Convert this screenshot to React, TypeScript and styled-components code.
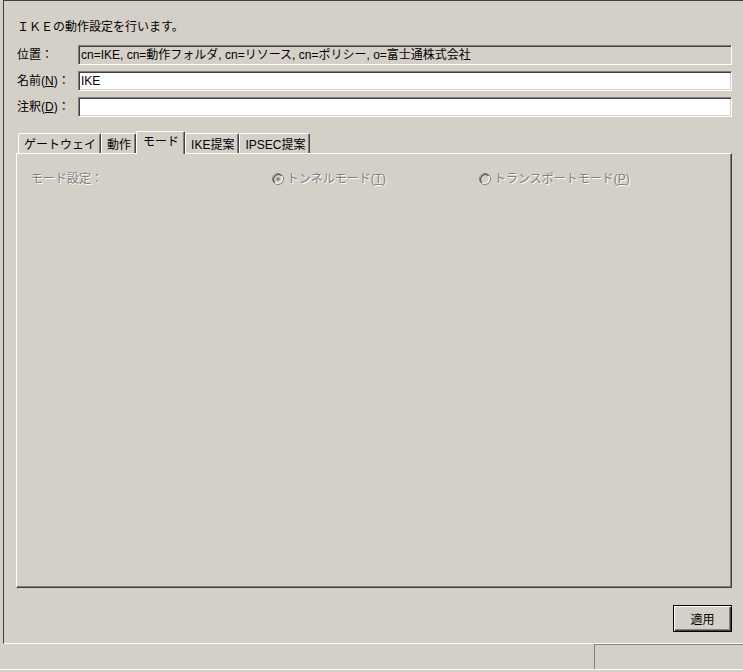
import React from "react";
import styled, { createGlobalStyle } from "styled-components";

const Global = createGlobalStyle`
  html, body { margin: 0; padding: 0; background: #d4d0c8; }
  body {
    font-family: "Liberation Sans", "Noto Sans CJK JP", sans-serif;
    font-size: 12px;
    color: #000;
    overflow: hidden;
  }
`;

const Root = styled.div`
  width: 743px;
  height: 672px;
  display: flex;
  flex-direction: column;
  background: #d4d0c8;
  overflow: hidden;
`;

const Main = styled.div`
  margin-left: 3px;
  height: 644px;
  box-sizing: border-box;
  border-top: 1px solid #404040;
  border-left: 1px solid #404040;
  border-bottom: 1px solid #ffffff;
  padding: 19px 11px 0 12px;
  display: flex;
  flex-direction: column;
`;

const Title = styled.div`
  height: 14px;
  line-height: 14px;
  margin-left: 1px;
  margin-bottom: 11px;
`;

const Form = styled.div`
  display: grid;
  grid-template-columns: 62px 1fr;
  row-gap: 6px;
  align-items: center;
`;

const Label = styled.div`
  line-height: 14px;
  margin-left: 1px;
`;

const Field = styled.div<{ $readonly?: boolean }>`
  height: 20px;
  box-sizing: border-box;
  background: ${(p) => (p.$readonly ? "#d4d0c8" : "#ffffff")};
  border-top: 1px solid #808080;
  border-left: 1px solid #808080;
  border-right: 1px solid #ffffff;
  border-bottom: 1px solid #ffffff;
  box-shadow: inset 1px 1px 0 #404040, inset -1px -1px 0 #d4d0c8;
  padding: 0 2px;
  line-height: 18px;
  white-space: nowrap;
  overflow: hidden;
`;

const TabArea = styled.div`
  margin-top: 14px;
  display: flex;
  flex-direction: column;
`;

const TabStrip = styled.div`
  display: flex;
  align-items: flex-end;
  height: 22px;
  padding-left: 2px;
  position: relative;
  z-index: 1;
`;

const Tab = styled.div<{ $active?: boolean }>`
  box-sizing: border-box;
  height: ${(p) => (p.$active ? "23px" : "20px")};
  margin: ${(p) => (p.$active ? "0 0 -1px 0" : "0")};
  padding: ${(p) => (p.$active ? "2px 5px 0 6px" : "3px 4px 0 5px")};
  border-top: 1px solid #ffffff;
  border-left: 1px solid #ffffff;
  border-right: 1px solid #404040;
  border-radius: 2px 2px 0 0;
  box-shadow: inset -1px 0 0 #808080;
  background: #d4d0c8;
  line-height: 16px;
  white-space: nowrap;
  position: relative;
  z-index: ${(p) => (p.$active ? 2 : 1)};
`;

const Panel = styled.div`
  height: 435px;
  box-sizing: border-box;
  border-top: 1px solid #ffffff;
  border-left: 1px solid #ffffff;
  border-right: 1px solid #404040;
  border-bottom: 1px solid #404040;
  box-shadow: inset -1px -1px 0 #808080;
  padding: 18px 0 0 14px;
`;

const ModeRow = styled.div`
  display: grid;
  grid-template-columns: 241px 207px 1fr;
  align-items: center;
  height: 14px;
`;

const Etched = styled.span`
  color: #808080;
  text-shadow: 1px 1px 0 #ffffff;
  line-height: 14px;
  white-space: nowrap;
`;

const RadioItem = styled.div`
  display: flex;
  align-items: center;
  gap: 3px;
`;

const Footer = styled.div`
  display: flex;
  justify-content: flex-end;
  margin-top: 17px;
`;

const Button = styled.button`
  width: 59px;
  height: 27px;
  box-sizing: border-box;
  background: #d4d0c8;
  border: 1px solid #000000;
  box-shadow: inset 1px 1px 0 #ffffff, inset -1px -1px 0 #404040, inset -2px -2px 0 #808080;
  font-family: "Liberation Sans", "Noto Sans CJK JP", sans-serif;
  font-size: 12px;
  color: #000;
  padding: 0;
`;

const StatusBar = styled.div`
  height: 25px;
  display: flex;
  justify-content: flex-end;
  border-bottom: 1px solid #ffffff;
`;

const StatusPanel = styled.div`
  width: 149px;
  box-sizing: border-box;
  border-top: 1px solid #808080;
  border-left: 1px solid #808080;
`;

const Radio = ({ checked }: { checked?: boolean }) => (
  <svg width="12" height="12" viewBox="0 0 12 12">
    <circle cx="6" cy="6" r="5.5" fill="#d4d0c8" stroke="#808080" />
    <path d="M2.5 9.5 A5 5 0 0 1 9.5 2.5" fill="none" stroke="#404040" strokeWidth="1" />
    <path d="M9.8 3 A5 5 0 0 1 3 9.8" fill="none" stroke="#ffffff" strokeWidth="1" />
    {checked && <circle cx="6" cy="6" r="1.8" fill="#808080" />}
  </svg>
);

const tabs = ["ゲートウェイ", "動作", "モード", "IKE提案", "IPSEC提案"];

export default function App() {
  return (
    <Root>
      <Global />
      <Main>
        <Title>ＩＫＥの動作設定を行います。</Title>
        <Form>
          <Label>位置：</Label>
          <Field $readonly>cn=IKE, cn=動作フォルダ, cn=リソース, cn=ポリシー, o=富士通株式会社</Field>
          <Label>
            名前(<u>N</u>)：
          </Label>
          <Field>IKE</Field>
          <Label>
            注釈(<u>D</u>)：
          </Label>
          <Field />
        </Form>
        <TabArea>
          <TabStrip>
            {tabs.map((t) => (
              <Tab key={t} $active={t === "モード"}>
                {t}
              </Tab>
            ))}
          </TabStrip>
          <Panel>
            <ModeRow>
              <Etched>モード設定：</Etched>
              <RadioItem>
                <Radio checked />
                <Etched>
                  トンネルモード(<u>T</u>)
                </Etched>
              </RadioItem>
              <RadioItem>
                <Radio />
                <Etched>
                  トランスポートモード(<u>P</u>)
                </Etched>
              </RadioItem>
            </ModeRow>
          </Panel>
        </TabArea>
        <Footer>
          <Button>適用</Button>
        </Footer>
      </Main>
      <StatusBar>
        <StatusPanel />
      </StatusBar>
    </Root>
  );
}
